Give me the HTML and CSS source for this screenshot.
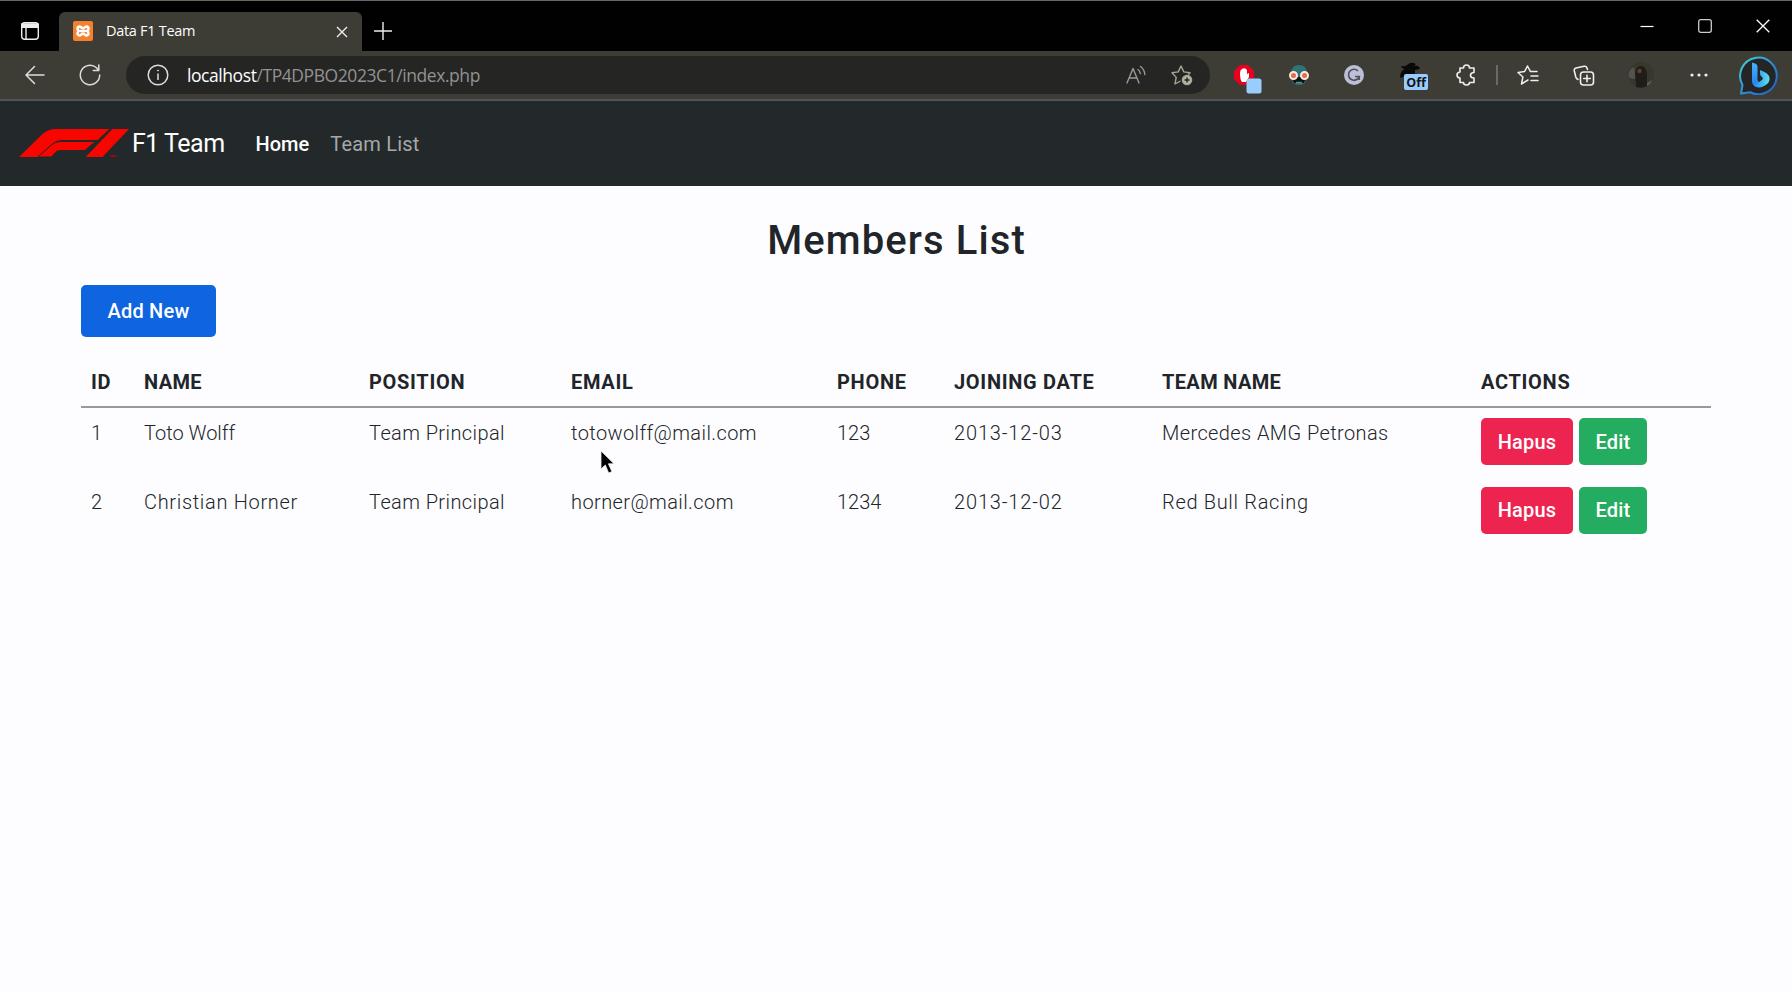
FILE: index.html
```html
<!DOCTYPE html>
<html lang="en">
<head>
<meta charset="utf-8">
<title>Data F1 Team</title>
<link rel="stylesheet" href="styles.css">
</head>
<body>
<header class="browser">
  <div class="tabstrip">
    <div class="tab-actions">
      <svg width="20" height="20" viewBox="0 0 20 20" fill="none" stroke="#eee" stroke-width="1.4"><rect x="1.7" y="1.7" width="16.6" height="16.6" rx="3"/><path d="M2 3h16v3.4H2z" fill="#eee"/><path d="M6 6v12"/></svg>
    </div>
    <div class="tab">
      <svg class="favicon" width="20" height="20" viewBox="0 0 20 20"><rect width="20" height="20" rx="2" fill="#f5802f"/><path d="M6 5.500c2.200 0 2.500 1.800 4 1.800s1.800-1.800 4-1.800M6 14.500c2.200 0 2.500-1.800 4-1.800s1.800 1.800 4 1.800M6 5.500c-2.500 1-1.500 3.200-.3 4.500-1.200 1.300-2.200 3.500.3 4.500M14 5.500c2.500 1 1.500 3.200.3 4.500 1.200 1.300 2.200 3.500-.3 4.500M8 10h4" fill="none" stroke="#fff" stroke-width="2.500" stroke-linecap="round"/></svg>
      <span class="tab-title">Data F1 Team</span>
      <svg class="tab-close" width="12" height="12" viewBox="0 0 12 12" stroke="#eee" stroke-width="1.4"><path d="M1 1l10 10M11 1L1 11"/></svg>
    </div>
    <svg class="new-tab" width="18" height="18" viewBox="0 0 18 18" stroke="#eee" stroke-width="1.4"><path d="M9 0v18M0 9h18"/></svg>
    <div class="window-controls">
      <svg width="14" height="14" viewBox="0 0 14 14" stroke="#fff" stroke-width="1.2"><path d="M.5 7.500h13"/></svg>
      <svg width="14" height="14" viewBox="0 0 14 14" fill="none" stroke="#ccc" stroke-width="1.300"><rect x=".7" y=".7" width="12.600" height="12.600" rx="2"/></svg>
      <svg width="14" height="14" viewBox="0 0 14 14" stroke="#fff" stroke-width="1.300"><path d="M.7.7l12.600 12.600M13.300.7L.7 13.300"/></svg>
    </div>
  </div>
  <div class="toolbar">
    <svg class="back" width="20" height="20" viewBox="0 0 20 20" fill="none" stroke="#ddd" stroke-width="1.500" stroke-linecap="round" stroke-linejoin="round"><path d="M19 10H1M9.500 1.500L1 10l8.500 8.500"/></svg>
    <svg class="reload" width="22" height="22" viewBox="0 0 22 22" fill="none" stroke="#ddd" stroke-width="1.500" stroke-linecap="round" stroke-linejoin="round"><path d="M20.700 11a9.700 9.700 0 1 1-3.200-7.200l1.900 2.200M19.800 1v5.500h-5.500"/></svg>
    <div class="address">
      <svg width="22" height="22" viewBox="0 0 22 22" fill="none" stroke="#ddd" stroke-width="1.500"><circle cx="11" cy="11" r="9.800"/><path d="M11 9.500V16"/><circle cx="11" cy="6.500" r=".6" fill="#ddd" stroke-width=".8"/></svg>
      <span class="url"><b>localhost</b>/TP4DPBO2023C1/index.php</span>
      <svg class="read" width="20" height="20" viewBox="0 0 20 20" fill="none" stroke="#999" stroke-width="1.400" stroke-linecap="round" stroke-linejoin="round"><path d="M1 18L7 3.500 13 18M3.200 13h7.600M12 4.500q2 1.500 2.300 4M14.500 1.500q4 3 4.300 8"/></svg>
      <svg class="fav" width="22" height="22" viewBox="0 0 22 22" fill="none" stroke="#a5a598" stroke-width="1.400" stroke-linejoin="round"><path d="M9.500 17L4 20l1.200-6.600L1 8.800l6.200-.9L10 2l2.800 5.900 6.200.9-1.700 2"/><circle cx="16" cy="16" r="4.600" fill="#b5b5a0"/><path d="M16 13.500v5M13.500 16h5" stroke="#222"/></svg>
    </div>
    <svg class="blocker" width="29" height="30" viewBox="0 0 29 30"><path d="M7 1h8l6 6v8l-6 6H7l-6-6V7z" fill="#e8001c"/><path d="M7 9q0-3 2-4 3-2 5 1v4l2-1v4l-3 5H9q-2-2-2-9z" fill="#fff"/><rect x="13.500" y="14.500" width="15" height="15" rx="2.500" fill="#99cdff"/></svg>
    <svg class="mask" width="20" height="20" viewBox="0 0 20 20"><path d="M2 9Q2 0 10 0t8 9l-2 9q-6 4-12 0z" fill="#2d7477"/><path d="M3 12h14l-2 6H5z" fill="#111"/><path d="M7 17.500h6" stroke="#4c9090" stroke-width="1.500"/><g fill="#e46c50" stroke="#ffe9dc" stroke-width="2"><circle cx="4.500" cy="10.500" r="3.500"/><circle cx="15.500" cy="10.500" r="3.500"/></g></svg>
    <svg class="grammar" width="20" height="20" viewBox="0 0 20 20" fill="none" stroke="#50505a" stroke-width="1.700"><circle cx="10" cy="10" r="10" fill="#bcbfd6" stroke="none"/><path d="M14 6a5.500 5.500 0 1 0 1.200 5.500H11M15.200 11.500V15"/></svg>
    <div class="hat">
      <svg width="26" height="28" viewBox="0 0 26 28"><path d="M0 17q0-7 5-9-3 0-4-3 4 1 6-1 4-4 9-1l-2 2q5-1 6 3l-5 1v6H5z" fill="#090909"/></svg>
      <span class="badge">Off</span>
    </div>
    <svg class="puzzle" width="20" height="22" viewBox="0 0 20 22" fill="none" stroke="#eee" stroke-width="1.600" stroke-linejoin="round"><path d="M4 4h3.500q0-3 3-3t3 3H18v4.500q-3.500 0-3.500 2.700T18 14v4.500h-4.500q0 2.500-3 2.500t-3-2.500H4V14q-3-.3-3-3t3-3z"/></svg>
    <span class="divider"></span>
    <svg class="star-list" width="22" height="21" viewBox="0 0 22 21" fill="none" stroke="#eee" stroke-width="1.500" stroke-linejoin="round" stroke-linecap="round"><path d="M11 15l-6.500 4 1.400-7L1 7.500l6.500-.9L10.500 1l3 5.600H20M14 11h7M14 15.500h7"/></svg>
    <svg class="collections" width="22" height="21" viewBox="0 0 22 21" fill="none" stroke="#eee" stroke-width="1.600" stroke-linecap="round"><rect x="7.500" y="7" width="13" height="13" rx="3"/><path d="M14 10.200v6.600M10.700 13.500h6.600M14.500 4.500L14 3q-.7-2.200-3-1.700L3 3Q.8 3.600 1.300 6l1.500 6q.6 2 2.200 2.400"/></svg>
    <svg class="avatar" width="28" height="28" viewBox="0 0 28 28"><circle cx="14" cy="14" r="13" fill="#38372e"/><path d="M2 17q-2-8 5-11l2 12z" fill="#55534e"/><path d="M9 26L8 12q1-7 6-7t6 8v12q-5 3-11 1z" fill="#201d18"/><path d="M20 22l5-3q-1 4-5 6z" fill="#5c5a55"/><circle cx="12.500" cy="10" r="2.200" fill="#60402f"/></svg>
    <svg class="more" width="18" height="4" viewBox="0 0 18 4" fill="#eee"><circle cx="2" cy="2" r="1.600"/><circle cx="9" cy="2" r="1.600"/><circle cx="16" cy="2" r="1.600"/></svg>
    <svg class="bing" width="40" height="40" viewBox="0 0 40 40"><defs><linearGradient id="ring" x2="1" y2="1"><stop stop-color="#43d4d0"/><stop offset=".5" stop-color="#2b91d8"/><stop offset="1" stop-color="#2758c8"/></linearGradient><linearGradient id="stem" x2="0" y2="1"><stop stop-color="#43b4f7"/><stop offset="1" stop-color="#267cf1"/></linearGradient><linearGradient id="bowl" x2="1"><stop stop-color="#2480ed"/><stop offset="1" stop-color="#59e3ef"/></linearGradient></defs><path d="M2 38.500L3.500 30A18.300 18.300 0 1 1 11 37.200z" fill="#252526" stroke="url(#ring)" stroke-width="2" stroke-linejoin="round"/><path d="M13 7.500q5.500 1 5.500 4V25l2 3-2 4q-5.500-1-5.500-6z" fill="url(#stem)"/><path d="M21 15q9 3 9.500 8 1 5-6.500 8.500-4 2-8 0-2-1-2.500-4 3 2 6 0l4-3q1-2-1-3-2-1-1.500-6.500z" fill="url(#bowl)"/></svg>
  </div>
</header>
<nav class="navbar">
  <svg class="logo" width="111" height="30" viewBox="0 0 113 30" preserveAspectRatio="none" fill="#f90500"><path d="M1 29L25 6Q31 1 39 1h54L81 12H45q-6 0-10 4L21 29z"/><path d="M20 29L34 17q4-3.500 9-3.500h36L68 22.500H43q-3 0-5 2L34 29z" stroke="#23292a" stroke-width="1"/><path d="M69 29L96 1h17L86 29z"/><path d="M94 27h6v2h-6z" fill="#99061a"/></svg>
  <span class="brand">F1 Team</span>
  <a class="home">Home</a>
  <a class="list">Team List</a>
</nav>
<main class="container">
  <h1>Members List</h1>
  <button class="btn add">Add New</button>
  <table>
    <colgroup><col class="c-id"><col class="c-name"><col class="c-pos"><col class="c-mail"><col class="c-phone"><col class="c-date"><col class="c-team"><col></colgroup>
    <thead><tr><th>ID</th><th class="name">NAME</th><th>POSITION</th><th>EMAIL</th><th>PHONE</th><th>JOINING DATE</th><th class="team">TEAM NAME</th><th>ACTIONS</th></tr></thead>
    <tbody>
      <tr><td>1</td><td class="short">Toto Wolff</td><td>Team Principal</td><td>totowolff@mail.com</td><td class="short">123</td><td class="date">2013-12-03</td><td>Mercedes AMG Petronas</td><td><div class="actions"><button class="btn delete">Hapus</button><button class="btn edit">Edit</button></div></td></tr>
      <tr><td>2</td><td class="wide">Christian Horner</td><td>Team Principal</td><td>horner@mail.com</td><td class="short">1234</td><td class="date">2013-12-02</td><td class="wide">Red Bull Racing</td><td><div class="actions"><button class="btn delete">Hapus</button><button class="btn edit">Edit</button></div></td></tr>
    </tbody>
  </table>
</main>
<svg class="cursor" width="15" height="25" viewBox="0 0 15 25"><path d="M1 1v18l4.300-4 3.400 8 3.200-1.400-3.500-7.800H14z" fill="#000" stroke="#eee" stroke-width=".8"/></svg>
</body>
</html>
```
FILE: styles.css
```css
* { box-sizing: border-box; }
body { margin: 0; min-height: 992px; overflow: hidden; background: #fdfdff; color: #212529; font: 350 20px/30px Roboto, sans-serif; }
svg { display: block; flex: none; }
.browser { height: 101px; border-top: 1px solid #66696b; border-bottom: 2px solid #4d5555; background: #3d3d36; font-family: "Open Sans", sans-serif; }
.tabstrip { display: flex; height: 50px; background: #010101; }
.tab-actions { width: 59px; padding: 20px 0 0 20px; }
.tab { display: flex; align-items: center; width: 303px; margin-top: 11px; padding: 0 14px 1px; border-radius: 6px 6px 0 0; background: #3d3d36; }
.tab-title { flex: 1; margin-left: 13px; color: #fff; font-size: 14.5px; font-weight: 400; letter-spacing: -.3px; }
.tab-close { margin-top: 2px; }
.new-tab { margin: 21px 0 0 12px; }
.window-controls { display: flex; gap: 44px; margin: 18px 22px 0 auto; }
.toolbar { display: flex; align-items: center; height: 48px; padding-left: 25px; }
.reload { margin-left: 34px; }
.address { display: flex; align-items: center; width: 1084px; height: 38px; margin-left: 25px; padding: 0 17px 0 21px; border-radius: 19px; background: #252524; }
.url { flex: 1; margin-left: 18px; color: #929292; font-size: 17.5px; font-weight: 400; letter-spacing: -.43px; }
.url b { color: #fff; font-weight: 500; }
.fav { margin-left: 25px; }
.blocker { margin: 7px 0 0 23px; }
.mask { margin-left: 27px; }
.grammar { margin-left: 35px; }
.hat { position: relative; margin-left: 36px; }
.badge { position: absolute; left: 4px; top: 13px; width: 24px; height: 16px; border-radius: 2px; background: #9acbff; color: #151515; font: 700 12.5px/17px "Open Sans", sans-serif; text-align: center; }
.puzzle { margin-left: 30px; }
.divider { width: 2px; height: 20px; margin-left: 20px; background: #6a6a68; }
.star-list { margin-left: 19px; }
.collections { margin-left: 34px; }
.avatar { margin-left: 32px; }
.more { margin-left: 35px; }
.bing { margin-left: 31px; }
.navbar { display: flex; align-items: center; height: 85px; padding-left: 18px; background: #23292a; color: #fff; font-weight: 400; }
.logo { margin-top: -1px; }
.brand { margin-left: 3px; font-size: 25px; font-weight: 450; letter-spacing: -.5px; }
.home { margin-left: 31px; font-weight: 500; }
.list { margin-left: 21px; color: #a5a9a7; letter-spacing: .2px; }
.container { padding: 31px 80px 0 81px; }
h1 { margin: 0 0 20px; font-size: 40px; line-height: 48px; font-weight: 500; letter-spacing: 1.1px; text-align: center; }
.btn { display: flex; align-items: center; justify-content: center; padding: 0; border: 0; border-radius: 5px; color: #fff; font: 500 20px/30px Roboto, sans-serif; letter-spacing: .2px; }
.add { width: 135px; height: 52px; background: #0f65df; }
table { width: 1630px; margin-top: 20px; border-collapse: separate; border-spacing: 0; table-layout: fixed; text-align: left; }
.c-id { width: 53px; }
.c-name { width: 225px; }
.c-pos { width: 202px; }
.c-mail { width: 266px; }
.c-phone { width: 117px; }
.c-date { width: 208px; }
.c-team { width: 319px; }
th { padding: 10px 10px 9px; font-weight: 700; letter-spacing: .7px; border-bottom: 2px solid #97999d; }
td { padding: 10px; vertical-align: top; letter-spacing: .4px; }
.name, .team { letter-spacing: .35px; }
.short { letter-spacing: 0; }
.wide { letter-spacing: .68px; }
.date { letter-spacing: .85px; }
.actions { display: flex; gap: 6px; height: 48.5px; }
.actions .btn { height: 47px; }
.delete { width: 92px; background: #ee2450; }
.edit { width: 68px; background: #24ad60; }
.cursor { position: absolute; left: 600px; top: 450px; }
```
